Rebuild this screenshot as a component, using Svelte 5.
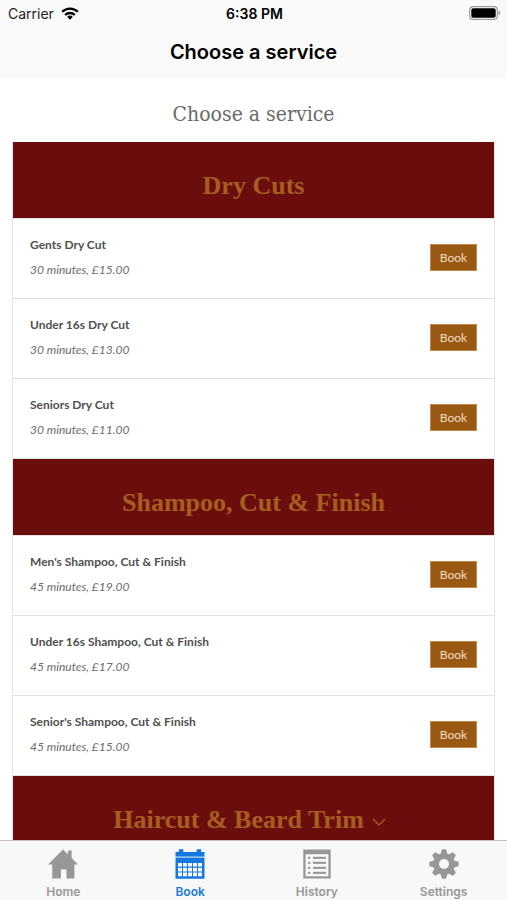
<script lang="ts">
  type Service = { name: string; minutes: number; price: string };
  type Group = { title: string; open: boolean; services: Service[] };

  let groups: Group[] = $state([
    {
      title: 'Dry Cuts',
      open: true,
      services: [
        { name: 'Gents Dry Cut', minutes: 30, price: '15.00' },
        { name: 'Under 16s Dry Cut', minutes: 30, price: '13.00' },
        { name: 'Seniors Dry Cut', minutes: 30, price: '11.00' },
      ],
    },
    {
      title: 'Shampoo, Cut & Finish',
      open: true,
      services: [
        { name: "Men's Shampoo, Cut & Finish", minutes: 45, price: '19.00' },
        { name: 'Under 16s Shampoo, Cut & Finish', minutes: 45, price: '17.00' },
        { name: "Senior's Shampoo, Cut & Finish", minutes: 45, price: '15.00' },
      ],
    },
    { title: 'Haircut & Beard Trim', open: false, services: [] },
  ]);

  const tabs = ['Home', 'Book', 'History', 'Settings'];
  let active = $state('Book');

  const teeth = [0, 45, 90, 135, 180, 225, 270, 315];
</script>

<div class="app">
  <header class="top">
    <div class="status">
      <span class="carrier">
        Carrier
        <svg width="18" height="13" viewBox="0 0 18 13" aria-hidden="true">
          <g fill="none" stroke="#000" stroke-width="2.3">
            <path d="M1.2 4.8a11 11 0 0 1 15.6 0" />
            <path d="M4.2 8a6.8 6.8 0 0 1 9.6 0" />
          </g>
          <path d="M9 12.8 6.2 9.9a4 4 0 0 1 5.6 0z" />
        </svg>
      </span>
      <span class="time">6:38 PM</span>
      <svg class="battery" width="32" height="14" viewBox="0 0 32 14" aria-hidden="true">
        <rect x="0.7" y="0.7" width="27.6" height="12.6" rx="3.4" fill="#fff" stroke="#9b9b9b" stroke-width="1.2" />
        <rect x="2.3" y="2.2" width="24.4" height="9.6" rx="1.8" />
        <path d="M29.7 4.8c2 .6 2 3.8 0 4.4z" fill="#8b8b8b" />
      </svg>
    </div>
    <h1>Choose a service</h1>
  </header>

  <main>
    <h2>Choose a service</h2>
    <div class="groups">
      {#each groups as group}
        <section>
          <h3>
            <button type="button" class="group-title" aria-expanded={group.open} onclick={() => (group.open = !group.open)}>
              {group.title}
              {#if !group.open}
                <svg class="chevron" width="14" height="8" viewBox="0 0 14 8" aria-hidden="true">
                  <path d="M1 1l6 6 6-6" fill="none" stroke="currentColor" stroke-width="1.4" />
                </svg>
              {/if}
            </button>
          </h3>
          {#if group.open}
            <ul>
              {#each group.services as service}
                <li>
                  <div class="info">
                    <strong>{service.name}</strong>
                    <em>{service.minutes} minutes, £{service.price}</em>
                  </div>
                  <button type="button" class="book" aria-label="Book {service.name}">Book</button>
                </li>
              {/each}
            </ul>
          {/if}
        </section>
      {/each}
    </div>
  </main>

  <nav>
    {#each tabs as tab}
      <button type="button" class="tab" class:active={active === tab} onclick={() => (active = tab)}>
        <svg width="30" height="30" viewBox="0 0 30 30" fill="currentColor" aria-hidden="true">
          {#if tab === 'Home'}
            <path d="M15 .5 20 5.4V1.5h3.6v7.4L30 15.4h-3.6V29.5h-7.9v-9h-5.6v9H4.2V15.4H0z" />
          {:else if tab === 'Book'}
            <path d="M.5 3h3.4V.3h4.4V3h13.4V.3h4.4V3h3.4v4.6H.5z" />
            <path d="M.5 7.6h29V9H.5z" opacity="0.45" />
            <path fill-rule="evenodd" d="M.5 9h29v20.7H.5zM3 14h4v3.6H3zm5 0h4v3.6H8zm5 0h4v3.6h-4zm5 0h4v3.6h-4zm5 0h4v3.6h-4zM3 18.8h4v3.6H3zm5 0h4v3.6H8zm5 0h4v3.6h-4zm5 0h4v3.6h-4zm5 0h4v3.6h-4zM3 23.6h4v3.6H3zm5 0h4v3.6H8zm5 0h4v3.6h-4zm5 0h4v3.6h-4zm5 0h4v3.6h-4z" />
          {:else if tab === 'History'}
            <path fill-rule="evenodd" d="M1.3.4h27.4v29.2H1.3zM3.6 5.3v22h22.8v-22z" />
            {#each [7.8, 12.8, 17.8, 22.8] as y}
              <rect x="6" {y} width="2.3" height="2.1" />
              <rect x="11" {y} width="13" height="2.1" />
            {/each}
          {:else}
            <circle cx="15" cy="15" r="7.9" fill="none" stroke="currentColor" stroke-width="5.8" />
            {#each teeth as angle}
              <path d="M11.3 6 12.6 1.2q.2-.9 1.1-.9h2.6q.9 0 1.1.9L18.7 6z" transform="rotate({angle} 15 15)" />
            {/each}
          {/if}
        </svg>
        <span>{tab}</span>
      </button>
    {/each}
  </nav>
</div>

<style>
  :global(body) {
    background: #fff;
  }

  .app {
    display: flex;
    flex-direction: column;
    height: 100vh;
    font-family: Inter, "Liberation Sans", sans-serif;
    color: #000;
  }

  button {
    border: none;
    padding: 0;
    font: inherit;
    cursor: pointer;
  }

  .top {
    flex-shrink: 0;
    height: 78px;
    background: #f9f9f9;
  }

  .status {
    display: grid;
    grid-template-columns: 1fr auto 1fr;
    align-items: center;
    height: 26px;
    padding: 0 6px 0 8px;
    font-size: 14px;
  }

  .carrier {
    display: flex;
    align-items: center;
    gap: 7px;
    color: #222;
  }

  .time {
    font-weight: 600;
  }

  .battery {
    justify-self: end;
  }

  h1 {
    margin: 0;
    font-size: 20px;
    font-weight: 600;
    line-height: 52px;
    text-align: center;
  }

  main {
    flex: 1;
    min-height: 0;
    overflow-y: auto;
    scrollbar-width: none;
    padding: 0 12px;
  }

  h2 {
    margin: 0;
    padding: 8px 0 0;
    font-family: "DejaVu Serif Condensed", "DejaVu Serif", serif;
    font-size: 21px;
    font-weight: 400;
    line-height: 56px;
    text-align: center;
    color: #6a6a6a;
  }

  .groups {
    border: 1px solid #e6e6e6;
    border-top: none;
  }

  h3 {
    margin: 0;
  }

  .group-title {
    display: flex;
    align-items: center;
    justify-content: center;
    gap: 8px;
    width: 100%;
    height: 76px;
    padding-top: 12px;
    background: #690d0d;
    color: #a85d20;
    font-family: "Liberation Serif", serif;
    font-size: 26px;
    font-weight: 700;
  }

  .chevron {
    margin-top: 4px;
    margin-right: 8px;
  }

  ul {
    margin: 0;
    padding: 0;
    list-style: none;
    border-bottom: 1px solid #e2e2e2;
  }

  li {
    display: flex;
    align-items: center;
    justify-content: space-between;
    box-sizing: border-box;
    height: 80px;
    padding: 0 17px 2px;
    border-top: 1px solid #e2e2e2;
  }

  .info {
    display: flex;
    flex-direction: column;
    gap: 5px;
    font-family: Lato, sans-serif;
    font-size: 12px;
    line-height: 20px;
    color: #505050;
  }

  .info em {
    color: #6c6c6c;
  }

  .book {
    width: 47px;
    height: 27px;
    border: 1px solid #c18a4c;
    background: #995912;
    color: #f3dfc6;
    font-family: Lato, sans-serif;
    font-size: 12px;
  }

  nav {
    display: flex;
    flex-shrink: 0;
    height: 60px;
    box-sizing: border-box;
    border-top: 1px solid #c4bcbc;
    background: #f8f8f8;
  }

  .tab {
    display: flex;
    flex: 1;
    flex-direction: column;
    align-items: center;
    gap: 5px;
    padding-top: 8px;
    background: none;
    color: #979797;
    font-size: 12px;
    font-weight: 600;
    line-height: 16px;
  }

  .tab.active {
    color: #1478e0;
  }
</style>
